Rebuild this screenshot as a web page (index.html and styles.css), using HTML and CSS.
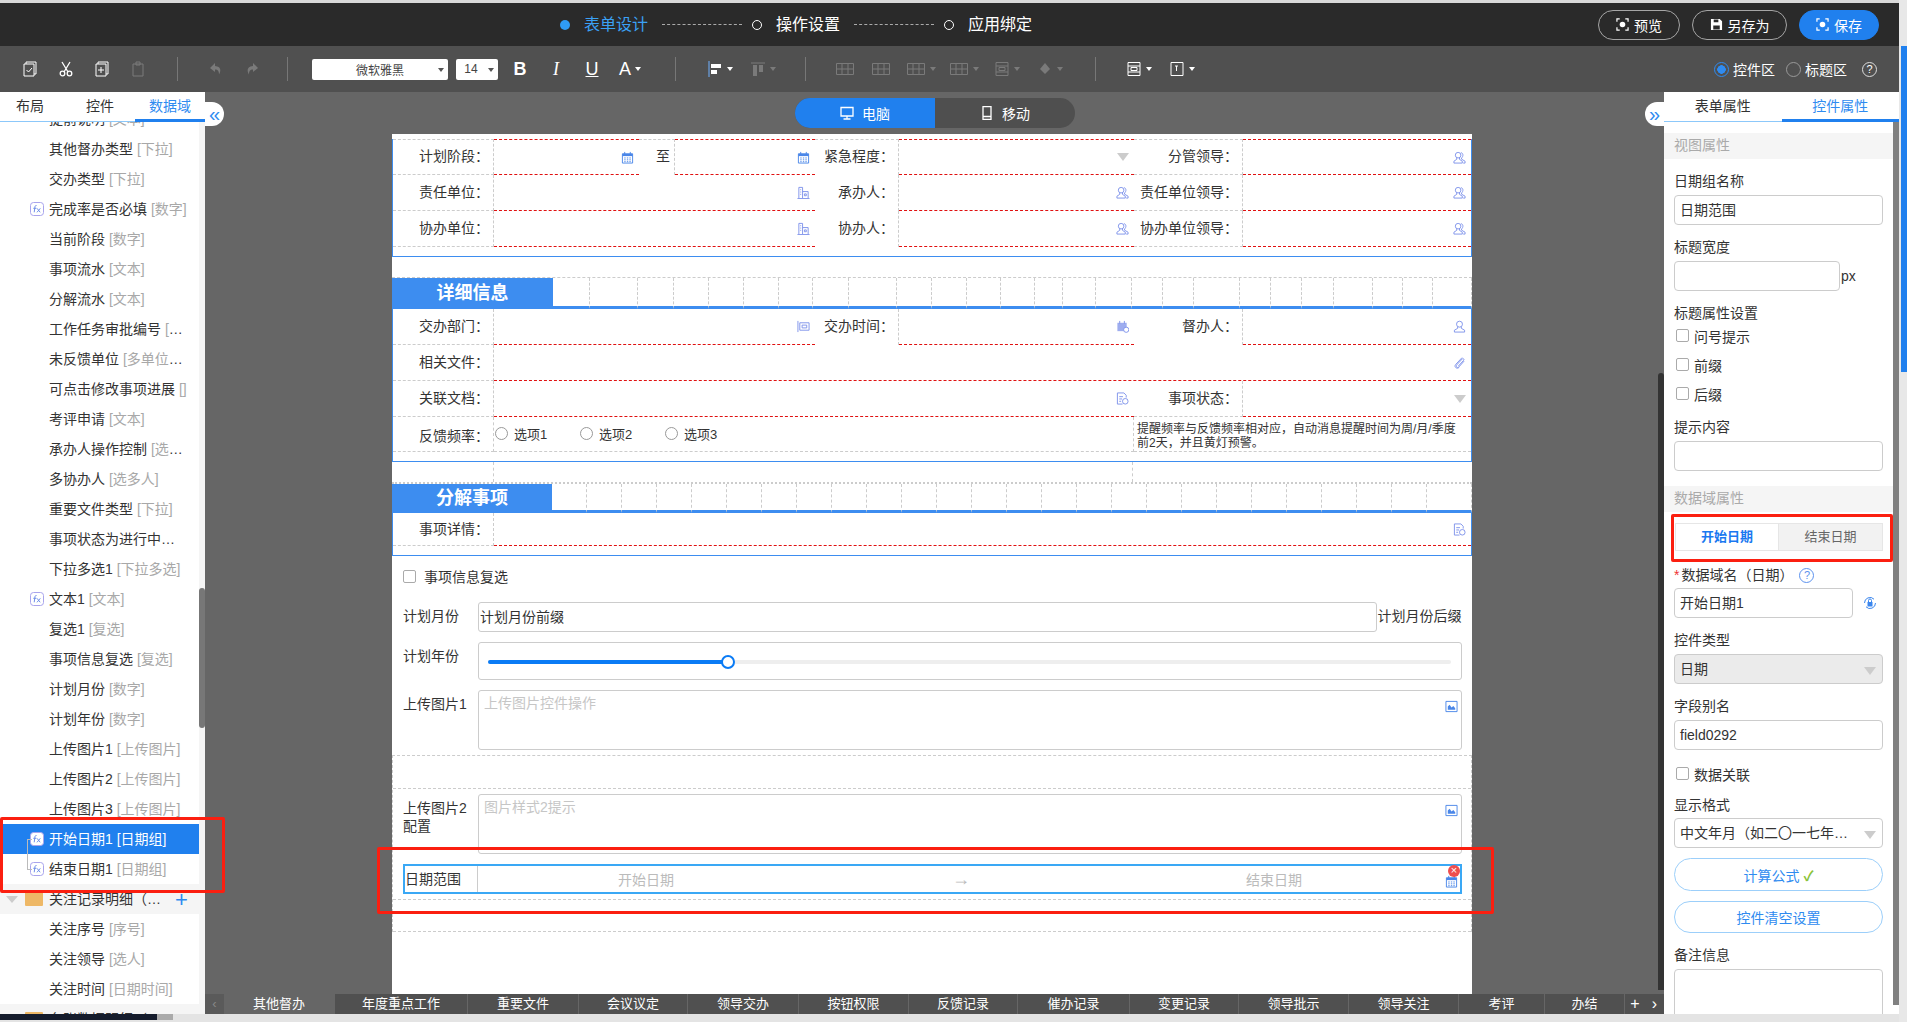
FILE: index.html
```html
<!DOCTYPE html>
<html lang="zh-CN">
<head>
  <meta charset="UTF-8">
  <title>表单设计</title>
  <link rel="stylesheet" href="styles.css">
</head>
<body>

<svg class="defs" width="0" height="0">
  <symbol id="i-cal" viewBox="0 0 14 14"><path d="M1.500 3h11v10h-11z" fill="#fff" stroke="currentColor"/><path d="M1.500 3h11v2.500h-11z" fill="currentColor"/><path d="M4 1v3M10 1v3M3.500 7.500h1.500M6.300 7.500h1.500M9 7.500h1.500M3.500 9.500h1.500M6.300 9.500h1.500M9 9.500h1.500M3.500 11.500h1.500M6.300 11.500h1.500M9 11.500h1.500" stroke="currentColor" fill="none"/></symbol>
  <symbol id="i-org" viewBox="0 0 14 14"><path d="M2 13V1.500h4V13M6 6h6v7M.5 13.500h13M3.500 4h1M3.500 6.500h1M3.500 9h1M8 8.500h2v2H8z" fill="none" stroke="currentColor"/></symbol>
  <symbol id="i-user" viewBox="0 0 14 14"><circle cx="7" cy="4.500" r="3.200" fill="none" stroke="currentColor"/><path d="M5 7.500v1.500L1.500 11v2h11v-2L9 9V7.500" fill="none" stroke="currentColor"/></symbol>
  <symbol id="i-users" viewBox="0 0 14 14"><circle cx="5.500" cy="4.500" r="3" fill="none" stroke="currentColor"/><path d="M4 7.500V9L1 11v2h9v-2L7 9V7.500M8.500 1.800c2.500.2 3 3.800.7 5.700v1.300L13 11v2h-2" fill="none" stroke="currentColor"/></symbol>
  <symbol id="i-dept" viewBox="0 0 14 14"><path d="M1 1v12M3 3h10v8H3zM5.500 5.500h5v3h-5z" fill="none" stroke="currentColor"/></symbol>
  <symbol id="i-time" viewBox="0 0 14 14"><path d="M1.500 3h10v9h-10z" fill="currentColor" opacity=".75"/><path d="M4 1v3M9 1v3" stroke="currentColor"/><circle cx="11" cy="10.500" r="2.800" fill="#fff" stroke="currentColor"/></symbol>
  <symbol id="i-clip" viewBox="0 0 14 14"><path d="M12 5.500 6.300 11.800c-1.500 1.500-3.800-.6-2.300-2.200l6-6.500c.9-1 2.500.4 1.500 1.500L5.800 10.800M9.800 1.700 3 9c-2.500 2.700 1.200 5.600 3.700 3.200" fill="none" stroke="currentColor"/></symbol>
  <symbol id="i-doc" viewBox="0 0 14 14"><path d="M7 13H1.500V1h7L11 3.500V6M3.500 5h4M3.500 7.500h3M3.500 10h2" fill="none" stroke="currentColor"/><circle cx="10" cy="10" r="3" fill="none" stroke="currentColor"/></symbol>
  <symbol id="i-pic" viewBox="0 0 14 14"><path d="M1 1.500h12v11H1z" fill="#fff" stroke="currentColor"/><path d="M3 10.500V7l2-2 2 3 2-1.500 2 2.500v1.500z" fill="currentColor"/></symbol>
  <symbol id="i-fx" viewBox="0 0 14 14"><rect x=".5" y=".5" width="13" height="13" rx="3" fill="#fff" stroke="#a9a4ec"/><path d="M6.500 3.500C5 3.300 5 4.500 4.800 6l-.6 4.300M3.300 6.300h3M7 6.300l3.200 4M10.300 6.300 7 10.300" fill="none" stroke="#6f8fe8"/></symbol>
  <symbol id="i-scan" viewBox="0 0 14 14"><path d="M1 4V1h3M10 1h3v3M13 10v3h-3M4 13H1v-3" fill="none" stroke="currentColor" stroke-width="1.300"/><circle cx="7" cy="7" r="3" fill="currentColor"/></symbol>
  <symbol id="i-save" viewBox="0 0 14 14"><path d="M1 1h9.500L13 3.500V13H1z" fill="currentColor"/><path d="M4 1.500h5v3H4zM3.500 8h7v4.500h-7z" fill="#2a2a2a"/></symbol>
  <symbol id="i-pc" viewBox="0 0 14 14"><path d="M1 1.500h12v8.500H1zM7 10v2.500M3.500 13h7" fill="none" stroke="currentColor" stroke-width="1.300"/></symbol>
  <symbol id="i-phone" viewBox="0 0 14 14"><path d="M3 .7h8v12.600H3zM3 10.500h8" fill="none" stroke="currentColor" stroke-width="1.300"/></symbol>
  <symbol id="i-checkdoc" viewBox="0 0 16 16"><path d="M4 3V1h10v12h-2M2 3h10v12H2zM4.500 9l2 2 3.500-4" fill="none" stroke="currentColor"/></symbol>
  <symbol id="i-cut" viewBox="0 0 16 16"><circle cx="4.500" cy="12.500" r="2.300" fill="none" stroke="currentColor" stroke-width="1.300"/><circle cx="11.500" cy="12.500" r="2.300" fill="none" stroke="currentColor" stroke-width="1.300"/><path d="M4 1l6 10M12 1 6 11" stroke="currentColor" stroke-width="1.300"/></symbol>
  <symbol id="i-copy" viewBox="0 0 16 16"><path d="M4 3V1h10v12h-2M2 3h10v12H2zM7 6v6M4 9h6" fill="none" stroke="currentColor"/></symbol>
  <symbol id="i-paste" viewBox="0 0 16 16"><path d="M3 3h10v12H3zM6 1h4v3H6z" fill="none" stroke="currentColor"/></symbol>
  <symbol id="i-undo" viewBox="0 0 16 16"><path d="M7 2 2 7l5 4V8.500c3 0 4 1.500 4 5 2-3 2.500-8-4-8.500z" fill="currentColor"/></symbol>
  <symbol id="i-redo" viewBox="0 0 16 16"><path d="m9 2 5 5-5 4V8.500c-3 0-4 1.500-4 5-2-3-2.500-8 4-8.500z" fill="currentColor"/></symbol>
  <symbol id="i-alignl" viewBox="0 0 16 16"><path d="M2 0v16" stroke="#6fb0ff"/><rect x="4" y="3" width="10" height="4" fill="currentColor"/><rect x="4" y="9" width="6" height="4" fill="currentColor"/></symbol>
  <symbol id="i-alignt" viewBox="0 0 16 16"><path d="M1 2h14" stroke="currentColor"/><rect x="3" y="4" width="4" height="11" fill="currentColor"/><rect x="9" y="4" width="4" height="7" fill="currentColor"/></symbol>
  <symbol id="i-grid" viewBox="0 0 20 16"><path d="M1.500 2.500h17v11h-17zM1.500 8h17M7 2.500v11M13 2.500v11" fill="none" stroke="currentColor"/></symbol>
  <symbol id="i-row" viewBox="0 0 16 16"><path d="M2 1.500h12v13H2zM2 5h12M2 11h12M5 6.500h6v3H5z" fill="none" stroke="currentColor"/></symbol>
  <symbol id="i-box" viewBox="0 0 16 16"><path d="M2 1.500h12v13H2zM6 5h3M7.500 5v5" fill="none" stroke="currentColor"/></symbol>
  <symbol id="i-fill" viewBox="0 0 16 16"><path d="m8 2 5 6-5 5-5-5z" fill="currentColor"/></symbol>
  <symbol id="i-lock" viewBox="0 0 14 14"><path d="M1.500 7a5.500 5.500 0 0 1 9.500-3.800M12.500 7A5.500 5.500 0 0 1 3 10.800" fill="none" stroke="currentColor"/><path d="M4.500 6h5v4.500h-5z" fill="currentColor"/><path d="M5.500 6V4.500a1.500 1.500 0 0 1 3 0V6" fill="none" stroke="currentColor"/></symbol>
</svg>

<div class="topline"></div>

<div class="page">
  <header class="topbar">
    <div class="steps">
      <span class="dot"></span><span class="step on">表单设计</span><span class="dash"></span>
      <span class="ring"></span><span class="step">操作设置</span><span class="dash"></span>
      <span class="ring"></span><span class="step">应用绑定</span>
    </div>
    <div class="actions">
      <button class="btn-top w82"><svg class="ic13"><use href="#i-scan"/></svg>预览</button>
      <button class="btn-top w95"><svg class="ic13"><use href="#i-save"/></svg>另存为</button>
      <button class="btn-top w80 primary"><svg class="ic13"><use href="#i-scan"/></svg>保存</button>
    </div>
  </header>

  <div class="toolbar">
    <span class="tool"><svg class="ic16"><use href="#i-checkdoc"/></svg></span>
    <span class="tool"><svg class="ic16"><use href="#i-cut"/></svg></span>
    <span class="tool"><svg class="ic16"><use href="#i-copy"/></svg></span>
    <span class="tool dim"><svg class="ic16"><use href="#i-paste"/></svg></span>
    <span class="sep s1"></span>
    <span class="tool dim"><svg class="ic16"><use href="#i-undo"/></svg></span>
    <span class="tool dim"><svg class="ic16"><use href="#i-redo"/></svg></span>
    <span class="sep s2"></span>
    <span class="pick pick-font">微软雅黑<i class="caret dark"></i></span>
    <span class="pick pick-size">14<i class="caret dark"></i></span>
    <span class="tool letter bold">B</span>
    <span class="tool letter ital">I</span>
    <span class="tool letter under">U</span>
    <span class="tool letter font-a">A<i class="caret"></i></span>
    <span class="sep s3"></span>
    <span class="tool wide"><svg class="ic16"><use href="#i-alignl"/></svg><i class="caret"></i></span>
    <span class="tool wide dim"><svg class="ic16"><use href="#i-alignt"/></svg><i class="caret"></i></span>
    <span class="sep s4"></span>
    <span class="tool dim"><svg class="ic-wide"><use href="#i-grid"/></svg></span>
    <span class="tool dim"><svg class="ic-wide"><use href="#i-grid"/></svg></span>
    <span class="tool wide dim"><svg class="ic-wide"><use href="#i-grid"/></svg><i class="caret"></i></span>
    <span class="tool wide dim"><svg class="ic-wide"><use href="#i-grid"/></svg><i class="caret"></i></span>
    <span class="tool wide dim"><svg class="ic16"><use href="#i-row"/></svg><i class="caret"></i></span>
    <span class="tool wide dim"><svg class="ic16"><use href="#i-fill"/></svg><i class="caret"></i></span>
    <span class="sep s5"></span>
    <span class="tool wide"><svg class="ic16"><use href="#i-row"/></svg><i class="caret"></i></span>
    <span class="tool wide"><svg class="ic16"><use href="#i-box"/></svg><i class="caret"></i></span>
    <div class="area-switch">
      <span class="area-radio on"></span><span>控件区</span>
      <span class="area-radio"></span><span>标题区</span>
      <span class="help-ring">?</span>
    </div>
  </div>

  <main class="workspace">
    <aside class="left-panel">
      <div class="tabs tabs-left">
        <span class="tab">布局</span><span class="tab">控件</span><span class="tab on">数据域</span>
      </div>
      <div class="field-list">
        <div class="rows">
          <div class="row">提前说明 <em>[文本]</em></div>
          <div class="row">其他督办类型 <em>[下拉]</em></div>
          <div class="row">交办类型 <em>[下拉]</em></div>
          <div class="row"><svg class="fx"><use href="#i-fx"/></svg>完成率是否必填 <em>[数字]</em></div>
          <div class="row">当前阶段 <em>[数字]</em></div>
          <div class="row">事项流水 <em>[文本]</em></div>
          <div class="row">分解流水 <em>[文本]</em></div>
          <div class="row">工作任务审批编号 <em>[文本]</em></div>
          <div class="row">未反馈单位 <em>[多单位选择]</em></div>
          <div class="row">可点击修改事项进展 <em>[]</em></div>
          <div class="row">考评申请 <em>[文本]</em></div>
          <div class="row">承办人操作控制 <em>[选人选择]</em></div>
          <div class="row">多协办人 <em>[选多人]</em></div>
          <div class="row">重要文件类型 <em>[下拉]</em></div>
          <div class="row">事项状态为进行中且已逾期</div>
          <div class="row">下拉多选1 <em>[下拉多选]</em></div>
          <div class="row"><svg class="fx"><use href="#i-fx"/></svg>文本1 <em>[文本]</em></div>
          <div class="row">复选1 <em>[复选]</em></div>
          <div class="row">事项信息复选 <em>[复选]</em></div>
          <div class="row">计划月份 <em>[数字]</em></div>
          <div class="row">计划年份 <em>[数字]</em></div>
          <div class="row">上传图片1 <em>[上传图片]</em></div>
          <div class="row">上传图片2 <em>[上传图片]</em></div>
          <div class="row">上传图片3 <em>[上传图片]</em></div>
          <div class="date-pair">
            <span class="pair-line"></span>
            <div class="row selected"><svg class="fx"><use href="#i-fx"/></svg>开始日期1 <em>[日期组]</em></div>
            <div class="row"><svg class="fx"><use href="#i-fx"/></svg>结束日期1 <em>[日期组]</em></div>
          </div>
          <div class="row group"><i class="tri"></i><i class="folder"></i><span class="group-name">关注记录明细（子表）</span><b class="plus">+</b></div>
          <div class="row">关注序号 <em>[序号]</em></div>
          <div class="row">关注领导 <em>[选人]</em></div>
          <div class="row">关注时间 <em>[日期时间]</em></div>
          <div class="row group"><i class="tri"></i><i class="folder"></i><span class="group-name">台账数据明细（子表）</span><b class="plus">+</b></div>
        </div>
        <div class="scroll-y"><span class="thumb-left"></span></div>
      </div>
    </aside>

    <section class="center">
      <button class="handle handle-left">«</button>
      <button class="handle handle-right">»</button>
      <div class="device-row">
        <div class="device">
          <span class="dev on"><svg class="ic14"><use href="#i-pc"/></svg>电脑</span>
          <span class="dev"><svg class="ic14"><use href="#i-phone"/></svg>移动</span>
        </div>
      </div>

      <div class="canvas">
        <div class="form-table first">
          <span class="lab">计划阶段：</span><span class="fld top blue"><svg class="ic"><use href="#i-cal"/></svg></span>
          <span class="lab nob">至</span><span class="fld top blue"><svg class="ic"><use href="#i-cal"/></svg></span>
          <span class="lab nob">紧急程度：</span><span class="fld top"><i class="tri-gray"></i></span>
          <span class="lab">分管领导：</span><span class="fld top"><svg class="ic"><use href="#i-users"/></svg></span>

          <span class="lab">责任单位：</span><span class="fld span3"><svg class="ic"><use href="#i-org"/></svg></span>
          <span class="lab nob">承办人：</span><span class="fld"><svg class="ic"><use href="#i-users"/></svg></span>
          <span class="lab">责任单位领导：</span><span class="fld"><svg class="ic"><use href="#i-users"/></svg></span>

          <span class="lab">协办单位：</span><span class="fld span3"><svg class="ic"><use href="#i-org"/></svg></span>
          <span class="lab nob">协办人：</span><span class="fld"><svg class="ic"><use href="#i-users"/></svg></span>
          <span class="lab">协办单位领导：</span><span class="fld"><svg class="ic"><use href="#i-users"/></svg></span>
          <div class="table-foot"></div>
        </div>

        <div class="band band-a">
          <span class="band-title">详细信息</span>
          <i></i><i></i><i></i><i></i><i></i><i></i><i></i><i></i><i></i><i></i><i></i><i></i><i></i><i></i><i></i><i></i><i></i><i></i><i></i><i></i><i></i><i></i><i></i><i></i><i></i><i></i>
        </div>
        <div class="form-table second">
          <span class="lab">交办部门：</span><span class="fld span3"><svg class="ic"><use href="#i-dept"/></svg></span>
          <span class="lab nob">交办时间：</span><span class="fld"><svg class="ic"><use href="#i-time"/></svg></span>
          <span class="lab nob">督办人：</span><span class="fld"><svg class="ic"><use href="#i-user"/></svg></span>

          <span class="lab">相关文件：</span><span class="fld span7"><svg class="ic"><use href="#i-clip"/></svg></span>

          <span class="lab">关联文档：</span><span class="fld span5"><svg class="ic"><use href="#i-doc"/></svg></span>
          <span class="lab">事项状态：</span><span class="fld"><i class="tri-gray"></i></span>

          <span class="lab low">反馈频率：</span>
          <span class="radios span5">
            <span class="radio-item"><i class="radio"></i>选项1</span>
            <span class="radio-item"><i class="radio"></i>选项2</span>
            <span class="radio-item"><i class="radio"></i>选项3</span>
          </span>
          <span class="note">提醒频率与反馈频率相对应，自动消息提醒时间为周/月/季度前2天，并且黄灯预警。</span>
          <div class="table-foot"></div>
        </div>
        <div class="table-tail"></div>

        <div class="band band-b">
          <span class="band-title">分解事项</span>
          <i></i><i></i><i></i><i></i><i></i><i></i><i></i><i></i><i></i><i></i><i></i><i></i><i></i><i></i><i></i><i></i><i></i><i></i><i></i><i></i><i></i><i></i><i></i><i></i><i></i><i></i>
        </div>
        <div class="form-table detail">
          <span class="lab">事项详情：</span><span class="fld span7"><svg class="ic"><use href="#i-doc"/></svg></span>
          <div class="table-foot"></div>
        </div>

        <label class="plain-check"><i class="check"></i>事项信息复选</label>

        <div class="ctl ctl-month">
          <span class="ctl-label">计划月份</span>
          <span class="ctl-box prefix">计划月份前缀</span>
          <span class="suffix">计划月份后缀</span>
        </div>
        <div class="ctl ctl-year">
          <span class="ctl-label">计划年份</span>
          <span class="ctl-box slider-box"><span class="slider"><span class="slider-fill"></span><span class="slider-thumb"></span></span></span>
        </div>
        <div class="ctl ctl-up">
          <span class="ctl-label">上传图片1</span>
          <span class="ctl-box upload"><span class="hint">上传图片控件操作</span><svg class="ic pic"><use href="#i-pic"/></svg></span>
        </div>

        <div class="drop-zone">
          <div class="drop-slot"></div>
          <div class="ctl ctl-up2">
            <span class="ctl-label">上传图片2<br>配置</span>
            <span class="ctl-box upload"><span class="hint">图片样式2提示</span><svg class="ic pic"><use href="#i-pic"/></svg></span>
          </div>
          <div class="date-range">
            <span class="date-label">日期范围</span>
            <span class="date-in date-start">开始日期</span>
            <span class="date-arrow">→</span>
            <span class="date-in date-end">结束日期</span>
            <svg class="ic date-ic"><use href="#i-cal"/></svg>
            <span class="del">×</span>
          </div>
          <div class="drop-slot ruled-top"></div>
        </div>
      </div>

      <nav class="sheet-tabs">
        <span class="sheet nav-btn">‹</span>
        <span class="sheet on">其他督办</span>
        <span class="sheet">年度重点工作</span>
        <span class="sheet">重要文件</span>
        <span class="sheet">会议议定</span>
        <span class="sheet">领导交办</span>
        <span class="sheet">按钮权限</span>
        <span class="sheet">反馈记录</span>
        <span class="sheet">催办记录</span>
        <span class="sheet">变更记录</span>
        <span class="sheet">领导批示</span>
        <span class="sheet">领导关注</span>
        <span class="sheet">考评</span>
        <span class="sheet">办结</span>
        <span class="sheet add-btn">+</span>
        <span class="sheet add-btn">›</span>
      </nav>
      <span class="scroll-canvas"></span>
    </section>

    <aside class="right-panel">
      <div class="tabs tabs-right">
        <span class="tab">表单属性</span><span class="tab on">控件属性</span>
      </div>
      <div class="props">
        <h3 class="prop-head">视图属性</h3>
        <div class="prop-label">日期组名称</div>
        <div class="input">日期范围</div>
        <div class="prop-label">标题宽度</div>
        <div class="input-line"><div class="input short"></div><span class="unit">px</span></div>
        <div class="prop-label before-check">标题属性设置</div>
        <label class="prop-check"><i class="check"></i>问号提示</label>
        <label class="prop-check"><i class="check"></i>前缀</label>
        <label class="prop-check"><i class="check"></i>后缀</label>
        <div class="prop-label tight">提示内容</div>
        <div class="input"></div>
        <h3 class="prop-head second">数据域属性</h3>
        <div class="seg"><span class="seg-item on">开始日期</span><span class="seg-item">结束日期</span></div>
        <div class="prop-label req-label"><span class="req">*</span> 数据域名（日期）<span class="help-ring blue">?</span></div>
        <div class="input-line"><div class="input name">开始日期1</div><svg class="lock"><use href="#i-lock"/></svg></div>
        <div class="prop-label">控件类型</div>
        <div class="input disabled">日期<i class="tri-gray"></i></div>
        <div class="prop-label">字段别名</div>
        <div class="input">field0292</div>
        <label class="prop-check mid"><i class="check"></i>数据关联</label>
        <div class="prop-label fmt">显示格式</div>
        <div class="input">
          <span class="ellipsis">中文年月（如二〇一七年一月）</span><i class="tri-gray"></i>
        </div>
        <button class="pill">计算公式 <span class="tick">✓</span></button>
        <button class="pill">控件清空设置</button>
        <div class="prop-label">备注信息</div>
        <div class="input area"></div>
        <span class="scroll-props"></span>
      </div>
    </aside>

    <div class="mark mark-list"></div>
    <div class="mark mark-seg"></div>
    <div class="mark mark-date"></div>
  </main>
</div>

<div class="page-scroll"><span class="page-scroll-thumb"></span></div>
<div class="bottom-scroll"><span class="bs-dark"></span><span class="bs-thumb"></span></div>

</body>
</html>
```

FILE: styles.css
```css
* { box-sizing: border-box; }
html, body { margin: 0; height: 100%; overflow: hidden; }
body { font-family: "Liberation Sans", "Noto Sans CJK SC", sans-serif; font-size: 14px; color: #333; background: #e8e8e8; position: relative; }
i, em { font-style: normal; }
button { font-family: inherit; }
.defs { position: absolute; }

.topline { height: 3px; background: #d9d9d9; }
.page { width: 1899px; height: 1011px; display: flex; flex-direction: column; }

/* top bar */
.topbar { height: 43px; background: #2a2a2a; display: flex; align-items: center; color: #fff; flex: none; }
.steps { display: flex; align-items: center; margin-left: 560px; font-size: 16px; }
.dot { width: 10px; height: 10px; border-radius: 50%; background: #2f9bf5; margin-right: 14px; }
.ring { width: 10px; height: 10px; border-radius: 50%; border: 1.5px solid #fff; margin-right: 14px; }
.step { line-height: 22px; }
.step.on { color: #3ba1f5; }
.dash { width: 80px; border-top: 1px dashed #aaa; margin: 0 10px 0 14px; }
.actions { margin-left: auto; margin-right: 20px; display: flex; gap: 12px; }
.btn-top { height: 30px; border-radius: 15px; border: 1px solid #a5a5a5; background: transparent; color: #fff; font-size: 14px; display: flex; align-items: center; justify-content: center; gap: 5px; padding: 0; }
.w82 { width: 82px; }
.w95 { width: 95px; }
.w80 { width: 80px; }
.btn-top.primary { background: #2080ee; border-color: #2080ee; }
.ic13 { width: 13px; height: 13px; }
.ic14 { width: 14px; height: 14px; }
.ic16 { width: 16px; height: 16px; }
.ic-wide { width: 20px; height: 16px; }

/* toolbar */
.toolbar { height: 46px; background: #505050; display: flex; align-items: center; padding-left: 12px; color: #fff; flex: none; }
.tool { width: 36px; height: 24px; display: flex; align-items: center; justify-content: center; color: #fff; }
.tool.wide { width: 43px; }
.tool.dim { color: #7a7a7a; }
.sep { width: 1px; height: 24px; background: #777; }
.s1 { margin: 0 20px 0 21px; }
.s2 { margin: 0 16px 0 17px; }
.s3 { margin: 0 22px 0 25px; }
.s4 { margin: 0 21px 0 21px; }
.s5 { margin: 0 21px 0 24px; }
.caret { width: 0; height: 0; border: 3px solid transparent; border-top: 4px solid #fff; border-bottom: 0; margin-left: 4px; }
.tool.dim .caret { border-top-color: #7a7a7a; }
.caret.dark { border-top-color: #555; }
.pick { height: 21px; background: #fff; border-radius: 2px; color: #444; font-size: 12px; display: flex; align-items: center; justify-content: center; position: relative; }
.pick .caret { position: absolute; right: 4px; top: 9px; }
.pick-font { width: 136px; margin-left: 8px; margin-right: 8px; }
.pick-size { width: 42px; padding-right: 12px; margin-right: 4px; }
.letter { font-size: 18px; }
.bold { font-weight: bold; }
.ital { font-style: italic; font-family: "Liberation Serif", serif; }
.under { text-decoration: underline; }
.font-a { width: 40px; }
.area-switch { margin-left: auto; margin-right: 22px; display: flex; align-items: center; font-size: 14px; gap: 4px; }
.area-radio { width: 15px; height: 15px; border-radius: 50%; border: 1px solid #999; margin-left: 7px; }
.area-radio.on { border-color: #2f8bf0; background: radial-gradient(circle, #2f8bf0 0 4px, transparent 4.5px); margin-left: 0; }
.help-ring { width: 15px; height: 15px; border-radius: 50%; border: 1px solid #ddd; font-size: 11px; line-height: 13px; text-align: center; color: #fff; margin-left: 11px; display: inline-block; }
.help-ring.blue { border-color: #5c92ee; color: #5c92ee; margin-left: 6px; }

/* main */
.workspace { flex: 1; display: flex; background: #666; position: relative; min-height: 0; }
.left-panel { width: 205px; background: #fff; display: flex; flex-direction: column; flex: none; position: relative; z-index: 2; }
.tabs { height: 30px; display: flex; border-bottom: 1px solid #8cc8fa; flex: none; position: relative; z-index: 2; background: #fff; }
.tab { flex: 1; text-align: center; line-height: 28px; font-size: 14px; height: 30px; }
.tab.on { color: #2f8bf0; border-bottom: 3px solid #2080ee; }
.tabs-left .tab { flex: none; width: 70px; }
.tabs-left .tab:first-child { width: 65px; padding-right: 5px; }
.field-list { flex: 1; display: flex; overflow: hidden; min-height: 0; }
.rows { width: 199px; margin-top: -18px; flex: none; }
.row { height: 30px; line-height: 31px; padding: 0 11px 0 49px; white-space: nowrap; overflow: hidden; text-overflow: ellipsis; position: relative; font-size: 14px; color: #333; }
.row em { color: #a8a8a8; }
.fx { position: absolute; left: 30px; top: 8px; width: 14px; height: 14px; }
.date-pair { position: relative; }
.pair-line { position: absolute; left: 27px; top: 15px; width: 5px; height: 31px; border: 1px solid #bbb; border-right: 0; z-index: 1; }
.row.selected { background: #2080ee; color: #fff; }
.row.selected em { color: #fff; }
.row.group { background: #f5f5f5; }
.tri { position: absolute; left: 6px; top: 12px; border: 6px solid transparent; border-top: 7px solid #ccc; border-bottom: 0; }
.folder { position: absolute; left: 25px; top: 8px; width: 18px; height: 14px; background: #eeb866; border-radius: 1px; }
.group-name { display: block; width: 113px; overflow: hidden; text-overflow: ellipsis; }
.plus { position: absolute; left: 175px; top: 0; font-size: 22px; font-weight: normal; color: #2f8bf0; }
.scroll-y { width: 6px; background: #f5f5f5; position: relative; }
.thumb-left { position: absolute; left: 0; top: 466px; width: 6px; height: 140px; background: #777; border-radius: 3px; }

/* centre */
.center { flex: 1; display: flex; flex-direction: column; position: relative; min-width: 0; }
.handle { position: absolute; top: 10px; width: 19px; height: 24px; background: #fff; border: 0; padding: 0; color: #2f8bf0; font-size: 20px; line-height: 20px; z-index: 3; }
.handle-left { left: 0; border-radius: 0 12px 12px 0; }
.handle-right { right: 0; border-radius: 12px 0 0 12px; }
.device-row { height: 42px; padding: 6px 0 0 590px; flex: none; }
.device { width: 280px; height: 30px; border-radius: 15px; overflow: hidden; display: flex; background: #4f4f4f; color: #fff; }
.dev { flex: none; width: 140px; display: flex; align-items: center; justify-content: center; gap: 8px; }
.dev.on { background: #2080ee; }
.canvas { width: 1080px; margin-left: 187px; flex: 1; background: #fff; padding-top: 5px; overflow: hidden; min-height: 0; font-size: 14px; }

/* form tables */
.form-table { display: grid; grid-template-columns: 101px 145px 36px 140px 84px 235px 109px 1fr; grid-auto-rows: 36px; border-left: 1px solid #3d8df0; border-right: 1px solid #3d8df0; }
.first { margin-bottom: 20px; grid-template-rows: 36px 36px 36px 10px; }
.second { grid-template-rows: 36px 36px 36px 35px 10px; }
.detail { grid-template-rows: 33px 10px; }
.lab { text-align: right; padding-right: 4px; line-height: 35px; border-right: 1px dashed #ccc; border-bottom: 1px dashed #ccc; white-space: nowrap; }
.lab.nob { border-bottom: 0; }
.first .lab:nth-child(-n+8) { border-top: 1px dashed #ccc; line-height: 33px; }
.low { line-height: 38px; }
.detail .lab { line-height: 32px; }
.fld { border-bottom: 1px dashed #e01010; display: flex; align-items: center; justify-content: flex-end; padding-right: 5px; }
.fld.top { border-top: 1px dashed #e01010; }
.span3 { grid-column: span 3; }
.span5 { grid-column: span 5; }
.span7 { grid-column: span 7; }
.ic { width: 13px; height: 13px; color: #7d92ea; }
.blue .ic { color: #4a86e8; }
.tri-gray { width: 0; height: 0; border: 6px solid transparent; border-top: 8px solid #ccc; border-bottom: 0; }
.table-foot { grid-column: 1 / -1; border-bottom: 1px solid #3d8df0; }
.radios { display: flex; align-items: center; padding-bottom: 2px; border-bottom: 1px dashed #ccc; border-right: 1px dashed #ccc; }
.radio-item { width: 85px; display: flex; align-items: center; gap: 6px; padding-left: 1px; font-size: 13px; }
.radio { width: 13px; height: 13px; border: 1px solid #999; border-radius: 50%; }
.note { grid-column: span 2; font-size: 12px; line-height: 14px; padding: 5px 14px 0 3px; border-bottom: 1px dashed #ccc; }
.table-tail { height: 20px; margin-left: 101px; border-left: 1px dashed #ccc; width: 640px; border-right: 1px dashed #ccc; }

.band { display: grid; height: 32px; border-top: 1px dashed #ccc; }
.band i { border-right: 1px dashed #ccc; border-bottom: 3px solid #3d8df0; }
.band-a { grid-template-columns: 161px 37px 48px 36px 35px 35px 35px 34px 36px 48px 35px 35px 34px 34px 28px 33px 36px 31px 31px 46px 31px 31px 32px 39px 30px 30px 1fr; }
.band-b { height: 31px; grid-template-columns: 160px repeat(25, 35px) 1fr; border-top: 2px dotted #ccc; }
.band-title { background: #3d8df0; color: #fff; font-size: 18px; font-weight: bold; text-align: center; line-height: 30px; }
.band-b .band-title { line-height: 29px; }

/* lower controls */
.plain-check { display: flex; align-items: center; height: 20px; margin: 10px 0 0 11px; gap: 8px; }
.check { width: 13px; height: 13px; border: 1px solid #aaa; border-radius: 2px; flex: none; display: inline-block; background: #fff; }
.ctl { display: flex; margin-left: 11px; width: 1059px; }
.ctl-label { width: 75px; flex: none; line-height: 18px; padding-top: 5px; white-space: nowrap; }
.ctl-box { flex: 1; border: 1px solid #ccc; border-radius: 3px; position: relative; }
.ctl-month { margin-top: 16px; height: 30px; }
.prefix { line-height: 28px; padding-left: 1px; }
.suffix { width: 85px; flex: none; line-height: 28px; text-align: center; white-space: nowrap; }
.ctl-year { margin-top: 10px; height: 38px; }
.slider-box { padding: 17px 10px 0 9px; }
.slider { display: block; height: 4px; background: #eee; border-radius: 2px; position: relative; }
.slider-fill { position: absolute; left: 0; top: 0; height: 4px; width: 238px; background: #0a7bf5; border-radius: 2px; }
.slider-thumb { position: absolute; left: 233px; top: -5px; width: 14px; height: 14px; border-radius: 50%; border: 2px solid #0a7bf5; background: #fff; }
.ctl-up { margin-top: 10px; height: 60px; }
.hint { color: #c6c6c6; margin-left: 5px; line-height: 24px; }
.pic { position: absolute; right: 3px; top: 9px; color: #4a86e8; }
.drop-zone { margin-top: 5px; border-top: 1px dashed #ccc; height: 177px; border-left: 1px dashed #ccc; border-right: 1px dashed #ccc; }
.drop-zone .ctl { margin-left: 10px; }
.drop-slot { height: 33px; border-bottom: 1px dashed #ccc; }
.ctl-up2 { margin-top: 5px; height: 60px; }
.date-range { margin: 10px 0 0 10px; width: 1059px; height: 30px; border: 2px solid #3aa8f5; display: flex; align-items: center; position: relative; }
.date-label { width: 73px; height: 26px; line-height: 26px; flex: none; border-right: 1px solid #ccc; }
.date-in { text-align: center; color: #bbb; flex: none; }
.date-start { width: 336px; }
.date-end { width: 372px; }
.date-arrow { color: #bbb; font-size: 18px; flex: 1; text-align: center; padding-left: 20px; }
.date-ic { position: absolute; right: 2px; top: 9px; color: #4a86e8; }
.del { position: absolute; right: 0; top: -1px; width: 12px; height: 12px; border-radius: 50%; background: #ef4e4e; color: #fff; font-size: 11px; line-height: 11px; text-align: center; }
.ruled-top { margin-top: 5px; border-top: 1px dashed #ccc; border-bottom: 1px dashed #ccc; }

/* sheet tabs */
.sheet-tabs { height: 20px; flex: none; background: #505050; display: grid; grid-template-columns: 19px 111px 133px 111px 109px 111px 110px 109px 112px 109px 110px 110px 86px 80px 20px 19px; }
.sheet { color: #fff; font-size: 13px; text-align: center; line-height: 20px; border-right: 1px solid #666; white-space: nowrap; }
.sheet.on { background: #666; }
.nav-btn { background: #5a5a5a; color: #888; border: 0; }
.add-btn { font-size: 16px; border: 0; }
.scroll-canvas { position: absolute; right: 0; top: 281px; bottom: 24px; width: 6px; background: #333; border-radius: 3px 3px 0 0; }

/* right panel */
.right-panel { width: 235px; background: #fff; flex: none; position: relative; z-index: 2; display: flex; flex-direction: column; overflow: hidden; }
.props { flex: 1; position: relative; padding-top: 11px; width: 229px; overflow: visible; }
.scroll-props { position: absolute; right: -6px; top: 0; width: 6px; bottom: 24px; background: #808080; }
.prop-head { margin: 0; height: 26px; line-height: 24px; background: #f5f5f5; color: #aaa; font-size: 14px; font-weight: normal; padding-left: 10px; }
.prop-head.second { margin-top: 15px; }
.prop-label { margin: 13px 0 3px 10px; line-height: 18px; height: 20px; }
.prop-label.before-check { margin-bottom: -3px; }
.prop-label.tight { margin-top: 10px; }
.prop-label.fmt { margin: 8px 0 2px 10px; }
.prop-label.req-label { margin-top: 14px; display: flex; align-items: center; }
.req { color: #e33; margin-right: 2px; }
.input { margin-left: 10px; width: 209px; height: 30px; border: 1px solid #ccc; border-radius: 4px; line-height: 28px; padding: 0 5px; position: relative; white-space: nowrap; }
.input .tri-gray { position: absolute; right: 6px; top: 12px; }
.input-line { display: flex; align-items: center; }
.input.short { width: 166px; }
.unit { margin-left: 1px; }
.input.name { width: 179px; }
.lock { width: 14px; height: 14px; margin-left: 10px; color: #3a86ee; }
.disabled { background: #ebebeb; }
.ellipsis { display: block; width: 170px; overflow: hidden; text-overflow: ellipsis; }
.prop-check { display: flex; align-items: center; gap: 5px; height: 29px; margin-left: 12px; }
.prop-check.mid { margin-top: 9px; }
.seg { margin: 11px 0 0 11px; width: 208px; height: 28px; display: flex; border: 1px solid #e6e6e6; font-size: 13px; }
.seg-item { flex: 1; text-align: center; line-height: 26px; background: #f2f2f2; color: #666; }
.seg-item.on { background: #fff; color: #1a78f0; font-weight: bold; flex: none; width: 103px; border-right: 1px solid #e6e6e6; }
.pill { display: block; margin: 10px 0 0 10px; width: 209px; height: 33px; border: 1px solid #9ccffa; border-radius: 17px; background: #fff; color: #2f8bf0; font-size: 14px; padding: 0; }
.pill + .pill { height: 32px; }
.tick { color: #8ac33a; font-weight: bold; }
.area { height: 60px; }

/* annotations */
.mark { position: absolute; border: 3px solid #fb1f10; border-radius: 2px; z-index: 5; pointer-events: none; }
.mark-list { left: 0; top: 725px; width: 225px; height: 76px; }
.mark-seg { left: 1671px; top: 422px; width: 222px; height: 48px; }
.mark-date { left: 377px; top: 755px; width: 1117px; height: 67px; }

/* window scrollbars */
.page-scroll { position: absolute; right: 0; top: 0; bottom: 0; width: 8px; background: #e8e8e8; }
.page-scroll-thumb { position: absolute; left: 2px; top: 46px; width: 6px; height: 326px; background: #2080ee; }
.bottom-scroll { position: absolute; left: 0; right: 8px; bottom: 0; height: 8px; background: #e4e4e4; }
.bs-dark { position: absolute; left: 0; top: 0; width: 157px; height: 6px; background: #151c2c; }
.bs-thumb { position: absolute; left: 157px; top: 0; width: 16px; height: 6px; background: #aaa; }
```
